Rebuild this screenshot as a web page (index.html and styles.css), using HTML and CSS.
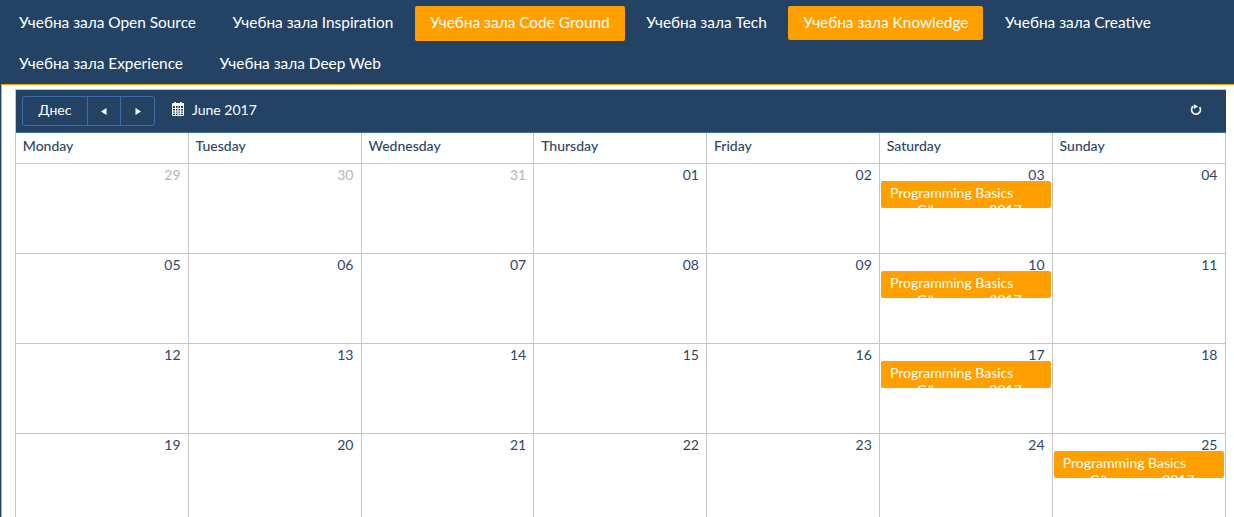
FILE: index.html
```html
<!DOCTYPE html>
<html lang="bg">
<head>
<meta charset="utf-8">
<title>Календар</title>
<link rel="stylesheet" href="styles.css">
</head>
<body>
<nav class="tabs">
  <a class="tab">Учебна зала Open Source</a>
  <a class="tab">Учебна зала Inspiration</a>
  <a class="tab active">Учебна зала Code Ground</a>
  <a class="tab">Учебна зала Tech</a>
  <a class="tab active short">Учебна зала Knowledge</a>
  <a class="tab">Учебна зала Creative</a>
  <a class="tab">Учебна зала Experience</a>
  <a class="tab">Учебна зала Deep Web</a>
</nav>
<main class="content">
  <section class="scheduler">
    <div class="toolbar">
      <div class="btn-group">
        <span class="btn today">Днес</span>
        <span class="btn arrow"><svg width="6" height="7" viewBox="0 0 6 7"><path d="M5.500 0v7L0 3.500z" fill="#fff"/></svg></span>
        <span class="btn arrow"><svg width="6" height="7" viewBox="0 0 6 7"><path d="M.5 0v7L6 3.500z" fill="#fff"/></svg></span>
      </div>
      <span class="date">
        <svg class="cal-icon" width="12" height="14" viewBox="0 0 12 14"><path d="M.5 1.500h11v12H.5zM.5 3.500h11M3.500 4v9M6 4v9M8.500 4v9M.5 6.500h11M.5 9h11M.5 11.200h11" fill="none" stroke="#fff"/><path d="M2.500 0h1.500v2H2.500zM8 0h1.500v2H8zM0 2h12v2H0z" fill="#fff"/></svg>
        June 2017
      </span>
      <span class="refresh"><svg width="12" height="12" viewBox="0 0 12 12"><path d="M3.300 2.300A4.400 4.400 0 1 0 9.600 3.200" fill="none" stroke="#fff" stroke-width="1.800"/><path d="M3.800 .2 8.200 2.400 3.800 5z" fill="#fff"/></svg></span>
    </div>
    <div class="grid">
      <div class="head">Monday</div><div class="head">Tuesday</div><div class="head">Wednesday</div><div class="head">Thursday</div><div class="head">Friday</div><div class="head">Saturday</div><div class="head">Sunday</div>

      <div class="day muted">29</div><div class="day muted">30</div><div class="day muted">31</div><div class="day">01</div><div class="day">02</div>
      <div class="day">03<div class="event">Programming Basics<br><span class="sub">C# - април 2017</span></div></div><div class="day">04</div>

      <div class="day">05</div><div class="day">06</div><div class="day">07</div><div class="day">08</div><div class="day">09</div>
      <div class="day">10<div class="event">Programming Basics<br><span class="sub">C# - април 2017</span></div></div><div class="day">11</div>

      <div class="day">12</div><div class="day">13</div><div class="day">14</div><div class="day">15</div><div class="day">16</div>
      <div class="day">17<div class="event">Programming Basics<br><span class="sub">C# - април 2017</span></div></div><div class="day">18</div>

      <div class="day">19</div><div class="day">20</div><div class="day">21</div><div class="day">22</div><div class="day">23</div>
      <div class="day">24</div><div class="day">25<div class="event">Programming Basics<br><span class="sub">C# - април 2017</span></div></div>
    </div>
  </section>
</main>
</body>
</html>
```
FILE: styles.css
```css
html, body {
  margin: 0;
  height: 517px;
  overflow: hidden;
  background: #244364;
  font-family: Lato, "Open Sans", sans-serif;
}
.tabs {
  height: 84px;
  box-sizing: border-box;
  padding: 6px 0 0 4px;
  display: flex;
  flex-wrap: wrap;
  align-content: flex-start;
  column-gap: 6.5px;
  row-gap: 6px;
}
.tab {
  padding: 0 15px;
  height: 35px;
  line-height: 33px;
  font-size: 15.4px;
  color: #fff;
  border-radius: 2px;
  white-space: nowrap;
}
.tab.active { background: #ff9f00; }
.tab.short { height: 34px; }
.content {
  height: 433px;
  box-sizing: border-box;
  background: #fff;
  border-top: 1px solid #ff9f00;
  border-left: 1px solid #ff9f00;
  margin-left: 1px;
  padding: 4px 8px 0 13px;
  overflow: hidden;
}
.scheduler {
  border-left: 1px solid #c5c5c5;
  border-top: 1px solid #c5c5c5;
}
.toolbar {
  background: #244364;
  height: 43px;
  box-sizing: border-box;
  border-bottom: 1px solid #3a6ea5;
  display: flex;
  align-items: center;
  padding: 0 24px 0 6px;
  color: #fff;
  font-size: 14px;
}
.btn-group {
  display: flex;
  height: 30px;
  box-sizing: border-box;
  border: 1px solid #3a6ea5;
  border-radius: 3px;
}
.btn {
  display: flex;
  align-items: center;
  justify-content: center;
  border-left: 1px solid #3a6ea5;
}
.btn:first-child { border-left: 0; }
.today { width: 64px; padding-bottom: 3px; box-sizing: border-box; }
.arrow { width: 32px; }
.arrow:last-child { width: 33px; }
.date {
  display: flex;
  align-items: center;
  gap: 8px;
  margin-left: 17px;
  padding-bottom: 4px;
}
.refresh { margin-left: auto; display: flex; padding-bottom: 2px; }
.grid {
  display: grid;
  grid-template-columns: repeat(7, 172.8px);
  grid-template-rows: 31px repeat(4, 90px);
}
.head {
  box-sizing: border-box;
  padding: 4px 6.8px;
  border-right: 1px solid #c5c5c5;
  border-bottom: 1px solid #c5c5c5;
  font-size: 14px;
  line-height: 18px;
  font-weight: 500;
  color: #2e4565;
}
.day {
  box-sizing: border-box;
  border-right: 1px solid #c5c5c5;
  border-bottom: 1px solid #c5c5c5;
  padding: 2px 7.2px 0 0;
  text-align: right;
  font-size: 14px;
  line-height: 18px;
  color: #2e4565;
  position: relative;
}
.day.muted { color: #b5b5b5; }
.event {
  position: absolute;
  left: 1px;
  right: 1px;
  top: 17px;
  height: 27px;
  box-sizing: border-box;
  overflow: hidden;
  background: #ff9f00;
  border-radius: 2px;
  color: #fff;
  text-align: left;
  font-size: 14px;
  line-height: 17px;
  padding: 3px 9px 0;
}
.sub {
  display: block;
  white-space: nowrap;
  padding-left: 27px;
}
```
